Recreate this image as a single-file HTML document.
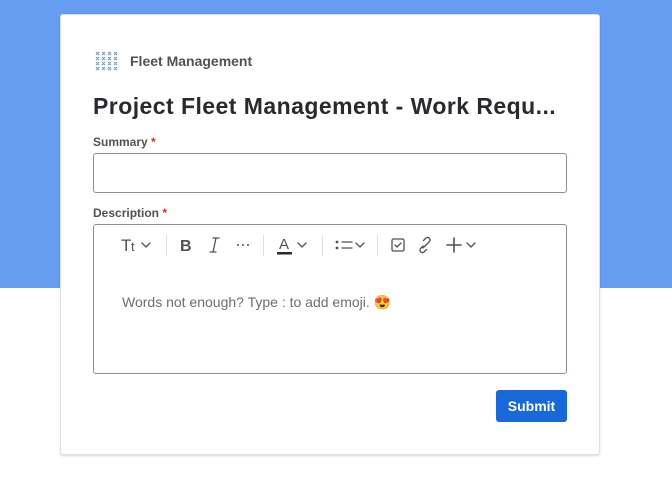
<!DOCTYPE html>
<html><head><style>
*{box-sizing:border-box;margin:0;padding:0}
body{width:672px;height:487px;background:#fff;font-family:"Liberation Sans",sans-serif;position:relative;overflow:hidden}
.bg{position:absolute;left:0;top:0;width:672px;height:288px;background:#669df1}
.card{position:absolute;left:60px;top:14px;width:540px;height:441px;background:#fff;border:1px solid #dcdfe4;border-radius:3px;box-shadow:0 1px 2px rgba(0,0,0,.15)}
.hdr{position:absolute;left:34px;top:35px;display:flex;align-items:center;gap:11px;font-size:14px;font-weight:bold;color:#505258}
h1{position:absolute;left:32px;top:78px;font-size:23px;font-weight:bold;color:#292a2e;white-space:nowrap;letter-spacing:0.45px}
.lbl{position:absolute;left:32px;font-size:12px;font-weight:bold;color:#505258}
.lbl span{color:#c9372c}
.inp{position:absolute;left:32px;width:474px;border:1px solid #8c8f97;border-radius:3px}
.ph{position:absolute;left:28px;top:69px;font-size:14px;color:#6b6e76}
.btn{position:absolute;left:435px;top:375px;width:71px;height:32px;background:#1868db;border-radius:3px;color:#fff;font-size:14px;font-weight:bold;text-align:center;line-height:32px}
.t{position:absolute}
</style></head><body>
<div class="bg"></div>
<div class="card">
<div class="hdr"><svg width="24" height="22" viewBox="0 0 24 22"><g stroke="#7a9bb5" stroke-width="1.2"><path d="M1 2l3 3M4 2l-3 3M7 2l3 3M10 2l-3 3M13 2l3 3M16 2l-3 3M19 2l3 3M22 2l-3 3M1 7l3 3M4 7l-3 3M7 7l3 3M10 7l-3 3M13 7l3 3M16 7l-3 3M19 7l3 3M22 7l-3 3M1 12l3 3M4 12l-3 3M7 12l3 3M10 12l-3 3M13 12l3 3M16 12l-3 3M19 12l3 3M22 12l-3 3M1 17l3 3M4 17l-3 3M7 17l3 3M10 17l-3 3M13 17l3 3M16 17l-3 3M19 17l3 3M22 17l-3 3"/></g></svg>Fleet Management</div>
<h1>Project Fleet Management - Work Requ...</h1>
<div class="lbl" style="top:120px">Summary <span>*</span></div>
<div class="inp" style="top:138px;height:40px"></div>
<div class="lbl" style="top:191px">Description <span>*</span></div>
<div class="inp" style="top:209px;height:150px">
<svg class="t" style="left:0;top:0" width="472" height="40" viewBox="0 0 472 40">
<g stroke="#dcdfe4" stroke-width="1"><path d="M72.5 10v21M169.5 10v21M228.5 10v21M283.5 10v21"/></g>
<g fill="none" stroke="#505258" stroke-width="1.3" stroke-linecap="round" stroke-linejoin="round">
<path d="M48 18l4 4 4-4M204 18l4 4 4-4M262 18l4 4 4-4M373 18l4 4 4-4"/>
<path d="M248 17h10M248 23h10"/>
<rect x="298" y="14" width="12" height="12" rx="1.5"/><path d="M301 20l2 2 4-4"/>
<path d="M329 21l-2.5 2.5a2.5 2.5 0 0 0 3.5 3.5l2.5-2.5M333 19l2.5-2.5a2.5 2.5 0 0 0-3.5-3.5l-2.5 2.5M329 23l4-4"/>
<path d="M360 13v14M353 20h14" stroke-width="1.6"/>
<path d="M119 13h6M116 27h6M122 13l-3 14"/>
</g>
<g fill="#505258"><circle cx="243" cy="17" r="1.4"/><circle cx="243" cy="23" r="1.4"/><circle cx="144" cy="20" r="1"/><circle cx="149" cy="20" r="1"/><circle cx="154" cy="20" r="1"/></g>
<rect x="183" y="27" width="15" height="2.5" fill="#292a2e"/>
<text x="27" y="26" font-size="17" fill="#505258" font-family="Liberation Sans">T</text><text x="37" y="26" font-size="13" fill="#505258" font-family="Liberation Sans">t</text>
<text x="86" y="26" font-size="16" font-weight="bold" fill="#505258" font-family="Liberation Sans">B</text>
<text x="185" y="24" font-size="15" fill="#505258" font-family="Liberation Sans">A</text>
</svg>
<div class="ph">Words not enough? Type : to add emoji. 😍</div>
</div>
<div class="btn">Submit</div>
</div>
</body></html>
